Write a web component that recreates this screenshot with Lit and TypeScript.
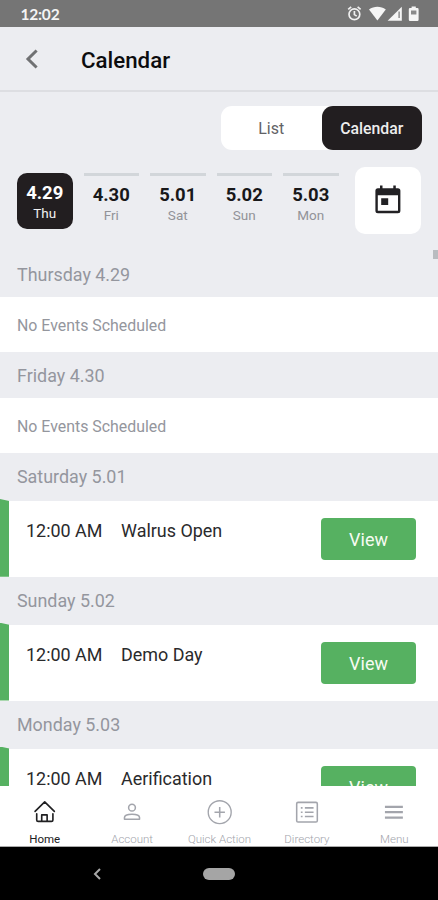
import { LitElement, html, css, svg } from "lit";
import { customElement, property } from "lit/decorators.js";
import { classMap } from "lit/directives/class-map.js";

interface Day {
  date: string;
  short: string;
  name: string;
  event?: string;
}

const days: Day[] = [
  { date: "4.29", short: "Thu", name: "Thursday" },
  { date: "4.30", short: "Fri", name: "Friday" },
  { date: "5.01", short: "Sat", name: "Saturday", event: "Walrus Open" },
  { date: "5.02", short: "Sun", name: "Sunday", event: "Demo Day" },
  { date: "5.03", short: "Mon", name: "Monday", event: "Aerification" },
];

const navIcons: Record<string, unknown> = {
  Home: svg`<path d="M3.700 12.800 13.700 3l10 9.800M5.400 15.300v6.400q0 1.500 1.500 1.500h13.800q1.500 0 1.500-1.500v-6.400M10.600 23.200v-6.700h5.600v6.700" stroke-width="1.700" stroke-linejoin="round" stroke-linecap="round"/>`,
  Account: svg`<circle cx="14" cy="9" r="3.500" stroke-width="1.600"/><path d="M6.200 20.900v-1.600c0-2.400 3.800-3.500 7.800-3.500s7.800 1.100 7.800 3.500v1.600z" stroke-width="1.600" stroke-linejoin="round"/>`,
  "Quick Action": svg`<circle cx="13.700" cy="13.700" r="11.900" stroke-width="1.400"/><path d="M13.700 8.300v10.800M8.300 13.700h10.800" stroke-width="1.600"/>`,
  Directory: svg`<rect x="3.300" y="3.500" width="21.400" height="20.400" rx="1.400" stroke-width="1.600"/><path d="M11.800 9.200h9M11.800 13.700h9M11.800 18.200h9M7.600 9.200h1.800M7.600 13.700h1.800M7.600 18.200h1.800" stroke-width="1.600"/>`,
  Menu: svg`<path d="M4.600 8.100h18.600M4.600 13.700h18.600M4.600 19.300h18.600" stroke-width="2.300"/>`,
};

@customElement("status-bar")
class StatusBar extends LitElement {
  static styles = css`
    :host { display: flex; height: 27px; box-sizing: border-box; padding: 0 18px 0 20.5px; align-items: center; justify-content: space-between; background: #757575; color: #f4f4f4; }
    .clock { font: 700 15.500px/25px "Lato", sans-serif; letter-spacing: -0.200px; padding-top: 2px; }
    .icons { display: block; }
  `;
  render() {
    return html`<span class="clock">12:02</span>
      <svg class="icons" width="74" height="27" viewBox="346 0 74 27" fill="#f5f5f5">
        <g fill="none" stroke="#f0f0f0" stroke-width="1.700">
          <circle cx="354.400" cy="14.300" r="5.400" />
          <path d="M354.400 11v3.600l2.300 1.500M348.200 9.400l3-2.500M360.600 9.400l-3-2.500" />
        </g>
        <path d="M369 9.400c4.800-3.500 12-3.500 16.800 0l-8.400 11z" />
        <path d="M401.800 6.800v14h-14.200z" />
        <path d="M398.500 11.500h1.200v6.500h-1.200z" fill="#757575" />
        <path d="M411.600 6.400h4.200v1.600h1.600q1.200 0 1.200 1.200v10.600q0 1.200-1.200 1.200h-7.400q-1.200 0-1.200-1.200V9.200q0-1.200 1.200-1.200h1.600z" />
        <path d="M411 10.500h5.400v4h-5.400z" fill="#8a8a8a" />
      </svg>`;
  }
}

@customElement("day-tab")
class DayTab extends LitElement {
  @property({ attribute: false }) day!: Day;
  @property({ type: Boolean }) selected = false;
  static styles = css`
    :host { display: block; flex: 0 0 55.5px; }
    .tab { height: 56px; box-sizing: border-box; border-top: 3px solid #d2d6da; text-align: center; padding-top: 9px; color: #18181a; }
    .date { font-size: 18.5px; line-height: 21px; font-weight: 700; letter-spacing: -0.1px; }
    .short { font-size: 13.5px; line-height: 19px; color: #929398; }
    .tab.selected { background: #221e20; border: 0; border-radius: 10px; color: #fff; padding-top: 10px; }
    .tab.selected .short { color: #f1f1f1; }
  `;
  render() {
    return html`<div class=${classMap({ tab: true, selected: this.selected })}>
      <div class="date">${this.day.date}</div>
      <div class="short">${this.day.short}</div>
    </div>`;
  }
}

@customElement("day-section")
class DaySection extends LitElement {
  @property({ attribute: false }) day!: Day;
  static styles = css`
    :host { display: block; }
    .heading { height: 46px; line-height: 47px; padding-left: 17px; font-size: 17.900px; color: #94969e; background: #ecedf1; }
    .heading.tall { height: 48px; }
    .empty { height: 55px; line-height: 57px; padding-left: 17px; font-size: 15.900px; color: #94969d; background: #fff; }
    .event { position: relative; display: flex; height: 75.800px; box-sizing: border-box; background: #fff; font-size: 17.950px; color: #2a2a2c; padding: 17px 22px 0 26px; }
    .mark { position: absolute; left: 0; top: -2px; bottom: 0; width: 9.300px; background: #56b161; clip-path: polygon(0 0, 100% 2px, 100% 100%, 0 100%); }
    .time { width: 95px; line-height: 26px; }
    .title { flex: 1; line-height: 26px; }
    .view { font: inherit; width: 95px; height: 42px; padding: 1px 0 0; border: 0; border-radius: 4px; background: #56b161; color: #f6fbf2; }
  `;
  render() {
    const { name, date, event } = this.day;
    return html`<div class=${classMap({ heading: true, tall: !!event })}>${name} ${date}</div>
      ${event
        ? html`<div class="event">
            <span class="mark"></span>
            <span class="time">12:00 AM</span>
            <span class="title">${event}</span>
            <button class="view">View</button>
          </div>`
        : html`<div class="empty">No Events Scheduled</div>`}`;
  }
}

@customElement("bottom-nav")
class BottomNav extends LitElement {
  static styles = css`
    :host { display: flex; height: 61px; background: #fff; border-bottom: 1px solid #aaa; box-sizing: border-box; padding-left: 1px; }
    .item { flex: 1 1 0; display: flex; flex-direction: column; align-items: center; color: #a3a5ac; font-size: 11.500px; font-weight: 300; }
    .item.active { color: #202022; font-weight: 400; }
    .icon { display: block; margin-top: 13px; fill: none; stroke: currentColor; }
    .label { line-height: 14px; margin-top: 6px; white-space: nowrap; }
  `;
  render() {
    return Object.entries(navIcons).map(
      ([label, icon], i) => html`<div class=${classMap({ item: true, active: i === 0 })}>
        <svg class="icon" width="28" height="28" viewBox="0 0 28 28">${icon}</svg>
        <span class="label">${label}</span>
      </div>`
    );
  }
}

@customElement("app-root")
class AppRoot extends LitElement {
  static styles = css`
    :host { display: flex; flex-direction: column; position: relative; width: 438px; height: 900px; overflow: hidden; background: #ecedf1; font-family: Roboto, "Liberation Sans", sans-serif; }
    .header { flex: none; display: flex; align-items: center; height: 65px; box-sizing: border-box; border-bottom: 2px solid #dddee2; padding-left: 24px; }
    .back { display: block; width: 18px; height: 22px; }
    .title { margin: 2px 0 0 39px; font-size: 22.300px; line-height: 28px; font-weight: 500; color: #0c0c0e; }
    .toggle { flex: none; display: flex; align-self: flex-end; margin: 14px 16px 0 0; width: 201px; height: 44px; border-radius: 11px; background: #fff; font-size: 16px; line-height: 46px; text-align: center; color: #626266; }
    .option { flex: 1; }
    .option.on { background: #221e20; color: #ededed; border-radius: 11px; font-size: 15.800px; font-weight: 500; }
    .week { flex: none; display: flex; align-items: flex-start; height: 84px; padding: 17px 17px 0 17px; }
    .days { display: flex; gap: 11px; padding-top: 6px; flex: 1; }
    .pick { display: flex; align-items: center; justify-content: center; width: 66px; height: 67px; border-radius: 10px; background: #fff; }
    .glyph { display: block; margin-bottom: 3px; }
    .list { flex: 1; min-height: 0; overflow: hidden; }
    .thumb { position: absolute; right: 0; top: 250px; width: 5px; height: 9px; background: #b9bcc0; }
    .nav, .system { flex: none; }
    .system { height: 53px; background: #000; display: flex; align-items: center; padding-left: 92px; }
    .pill { width: 32px; height: 12px; border-radius: 6px; background: #a5a5a5; margin-left: 101px; }
  `;
  render() {
    return html`
      <status-bar class="nav"></status-bar>
      <div class="header">
        <svg class="back" viewBox="0 0 18 22" fill="none" stroke="#707173" stroke-width="3"><path d="M12.600 2.500 4 11l8.600 8.500" /></svg>
        <div class="title">Calendar</div>
      </div>
      <div class="toggle"><span class="option">List</span><span class="option on">Calendar</span></div>
      <div class="week">
        <div class="days">
          ${days.map((d, i) => html`<day-tab .day=${d} ?selected=${i === 0}></day-tab>`)}
        </div>
        <div class="pick">
          <svg class="glyph" width="28" height="30" viewBox="0 0 28 30">
            <path fill="#222124" fill-rule="evenodd" d="M6 1.600h2.500v2.600h10.800V1.600h2.500v2.600h2.100q2.500 0 2.500 2.500v20q0 2.500-2.500 2.500H3.900q-2.500 0-2.500-2.500v-20q0-2.500 2.500-2.500H6zM3.800 11.200v15.600H24V11.200zM7.200 14.200h7v6.800h-7z" />
          </svg>
        </div>
      </div>
      <div class="list">${days.map((d) => html`<day-section .day=${d}></day-section>`)}</div>
      <span class="thumb"></span>
      <bottom-nav class="nav"></bottom-nav>
      <div class="system">
        <svg width="10" height="14" viewBox="0 0 10 14" fill="none" stroke="#a8a8a8" stroke-width="2"><path d="M8 2 3 7l5 5" /></svg>
        <span class="pill"></span>
      </div>`;
  }
}
